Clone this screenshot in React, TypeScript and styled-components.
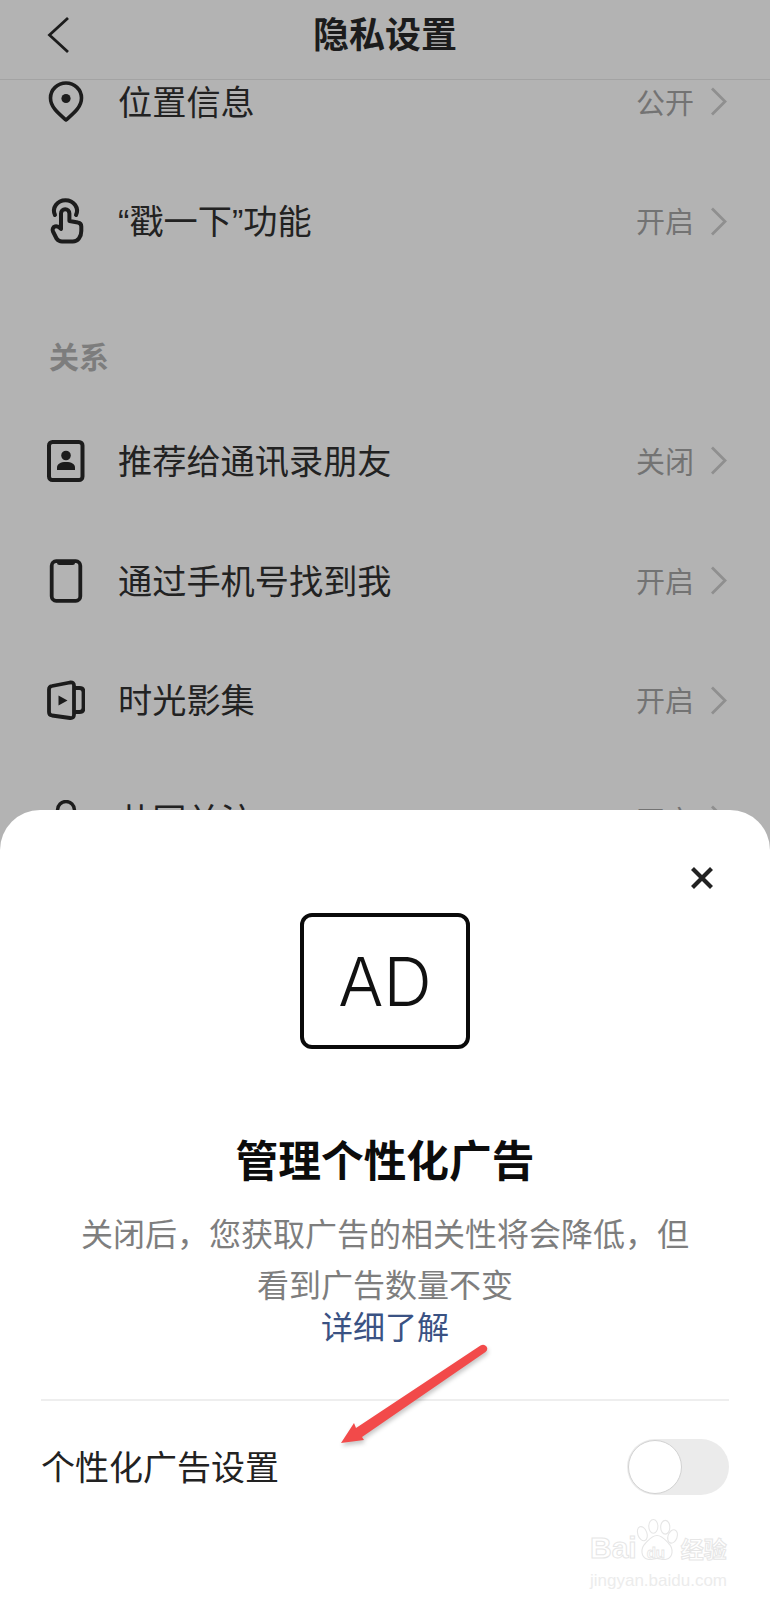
import React from "react";
import styled, { createGlobalStyle } from "styled-components";

const Global = createGlobalStyle`
  html, body { margin: 0; padding: 0; background: #b3b3b3; }
  * { box-sizing: border-box; }
`;

const CJK = `"Noto Sans CJK SC", "Noto Sans", sans-serif`;

const Phone = styled.div`
  position: relative;
  width: 770px;
  height: 1600px;
  overflow: hidden;
  background: #b3b3b3;
  font-family: ${CJK};
`;

const Header = styled.header`
  position: relative;
  z-index: 2;
  height: 80px;
  display: grid;
  grid-template-columns: 1fr auto 1fr;
  align-items: center;
  padding: 0 47px 15px;
  background: #b3b3b3;
  border-bottom: 1px solid #a3a3a3;
`;

const BackIcon = styled.svg`
  margin-top: 6px;
`;

const Title = styled.h1`
  margin: 0;
  font-size: 36px;
  line-height: 44px;
  font-weight: 700;
  color: #1c1c1c;
`;

const List = styled.main`
  margin-top: -38px;
  padding: 0 43px 0 47px;
`;

const Row = styled.div`
  height: 119.6px;
  display: flex;
  align-items: center;
`;

const IconSlot = styled.div`
  width: 38px;
  display: flex;
  justify-content: center;
  align-items: center;
  margin-right: 33px;
  color: #1c1c1c;
`;

const RowLabel = styled.span`
  flex: 1;
  font-family: "Liberation Sans", ${CJK};
  font-size: 34.2px;
  font-weight: 400;
  color: #222;
  line-height: 44px;
  padding-top: 2px;
`;

const RowValue = styled.span`
  font-size: 29px;
  color: #737373;
  margin-right: 16px;
  line-height: 40px;
  padding-bottom: 2px;
`;

const SectionLabel = styled.div`
  height: 120px;
  display: flex;
  align-items: flex-end;
  padding: 0 0 26px 2px;
  font-size: 30px;
  line-height: 40px;
  font-weight: 700;
  color: #7d7d7d;
`;

const Sheet = styled.section`
  position: absolute;
  z-index: 3;
  left: 0;
  right: 0;
  top: 810px;
  bottom: 0;
  padding: 103px 41px 0;
  background: #fff;
  border-radius: 40px 40px 0 0;
  display: flex;
  flex-direction: column;
  align-items: center;
`;

const Close = styled.div`
  position: absolute;
  right: 56px;
  top: 56px;
  width: 24px;
  height: 24px;
  display: flex;
`;

const AdBox = styled.div`
  width: 170px;
  height: 136px;
  border: 4px solid #0a0a0a;
  border-radius: 12px;
  display: flex;
  align-items: center;
  justify-content: center;
  font-family: Inter, "Liberation Sans", sans-serif;
  font-weight: 300;
  font-size: 67px;
  line-height: 1;
  color: #111;
`;

const SheetTitle = styled.h2`
  margin: 80px 0 0;
  font-size: 42.7px;
  line-height: 58px;
  font-weight: 700;
  color: #0c0c0c;
`;

const Desc = styled.p`
  margin: 20px 0 0;
  width: 620px;
  text-align: center;
  font-size: 32px;
  line-height: 51px;
  color: #7e7e7e;
`;

const More = styled.a`
  display: block;
  font-size: 32px;
  line-height: 40px;
  margin-top: -4px;
  color: #3a5283;
`;

const Divider = styled.hr`
  align-self: stretch;
  margin: 54px 0 0;
  border: 0;
  height: 2px;
  background: #eeeeee;
`;

const SettingRow = styled.div`
  align-self: stretch;
  margin-top: 37px;
  display: flex;
  align-items: center;
  justify-content: space-between;
`;

const SettingLabel = styled.span`
  font-size: 34px;
  line-height: 56px;
  padding-bottom: 2px;
  color: #222;
`;

const Track = styled.div`
  width: 102px;
  height: 56px;
  border-radius: 28px;
  background: #ebebeb;
  display: flex;
  align-items: center;
  padding-left: 1px;
`;

const Knob = styled.div`
  width: 54px;
  height: 54px;
  border-radius: 50%;
  background: #fff;
  border: 1px solid #d2d2d2;
`;

const ArrowMark = styled.svg`
  position: absolute;
  z-index: 4;
  left: 330px;
  top: 1335px;
  filter: drop-shadow(1px 3px 2px rgba(0, 0, 0, 0.22));
`;

const Watermark = styled.div`
  position: absolute;
  z-index: 4;
  left: 590px;
  top: 1516px;
  width: 150px;
  display: flex;
  flex-direction: column;
`;

const MarkTop = styled.div`
  display: flex;
  align-items: flex-end;
  height: 48px;
  white-space: nowrap;
`;

const Outlined = styled.span<{ $size: number }>`
  font-family: ${(p) => (p.$size > 24 ? `"Liberation Sans", sans-serif` : CJK)};
  font-size: ${(p) => p.$size}px;
  line-height: 32px;
  font-weight: 700;
  color: #fff;
  -webkit-text-stroke: 1px #e6e6e6;
`;

const Paw = styled.div`
  position: relative;
  width: 44px;
  height: 46px;
  flex: none;
  margin: 0 2px 0 -2px;
`;

const PawText = styled.span`
  position: absolute;
  left: 12px;
  top: 27px;
  font-family: "Liberation Sans", sans-serif;
  font-size: 15px;
  line-height: 16px;
  font-weight: 700;
  color: #fff;
  -webkit-text-stroke: 0.8px #e6e6e6;
`;

const MarkUrl = styled.div`
  margin-top: 7px;
  font-family: "Liberation Sans", sans-serif;
  font-size: 17px;
  line-height: 20px;
  white-space: nowrap;
  color: #ececec;
`;

const Chevron = () => (
  <svg width="17" height="29" viewBox="0 0 17 29" fill="none" stroke="#8f8f8f" strokeWidth="2.8">
    <path d="M2 1.5 15 14.5 2 27.5" />
  </svg>
);

const Pin = () => (
  <svg width="36" height="42" viewBox="48 81 36 42" fill="none" stroke="currentColor" strokeWidth="3.6">
    <path d="M66 120 C58 113 50.5 107 50.5 98 a15.5 15 0 0 1 31 0 C81.5 107 74 113 66 120 Z" strokeLinejoin="round" />
    <circle cx="66" cy="98.5" r="4.6" fill="currentColor" stroke="none" />
  </svg>
);

const Touch = () => (
  <svg width="38" height="48" viewBox="47 198 38 48" fill="none" stroke="currentColor" strokeWidth="4" strokeLinejoin="round" strokeLinecap="round">
    <path d="M55 216 a11.5 10.5 0 1 1 21 0" />
    <path d="M61 229 V214.5 a4.2 4.2 0 0 1 8.4 0 V222 l8.5 1.5 a4 4 0 0 1 3.4 4 V232 c0 6 -3.5 10.5 -8.5 10.5 H62 c-2.5 0 -4 -1 -5.5 -3 L53 232.5 c-1 -2 0 -4.5 2 -5 c2 -.5 4 .3 6 2.5 Z" />
  </svg>
);

const Contact = () => (
  <svg width="38" height="42" viewBox="47 441 38 42" fill="none">
    <rect x="49" y="443" width="33.5" height="38" rx="3.5" stroke="currentColor" strokeWidth="4" />
    <circle cx="66" cy="456.5" r="4.8" fill="currentColor" />
    <path d="M57 471 v-2.5 c0 -3.5 3.5 -5.5 9 -5.5 s9 2 9 5.5 v2.5 Z" fill="currentColor" />
  </svg>
);

const Mobile = () => (
  <svg width="34" height="44" viewBox="50 559.5 34 44" fill="none">
    <rect x="52.7" y="561.7" width="28.6" height="39.6" rx="4.5" stroke="currentColor" strokeWidth="3.8" />
    <path d="M58 561 H76 V563 q0 2.5 -2.5 2.5 H60.5 Q58 565.5 58 563 Z" fill="currentColor" />
  </svg>
);

const Film = () => (
  <svg width="38" height="40" viewBox="47 681.5 38 40" fill="none" stroke="currentColor" strokeWidth="3.8" strokeLinejoin="round">
    <path d="M49 691 q0 -3 3 -3.5 L70 684 q4 -.5 4 3 V716 q0 4 -4 3.5 L52 717 q-3 -.5 -3 -3.5 Z" />
    <path d="M75 689.5 H79.5 q4 0 4 4 V709.5 q0 4 -4 4 H75" />
    <path d="M58.5 697 L67.5 702 L58.5 707 Z" fill="currentColor" stroke="none" />
  </svg>
);

const Friend = () => (
  <svg width="38" height="40" viewBox="47 800 38 40" fill="none" stroke="currentColor" strokeWidth="3.4">
    <circle cx="66" cy="810" r="8.5" />
  </svg>
);

const settings: { label: string; value: string; icon: React.ReactNode }[] = [
  { label: "位置信息", value: "公开", icon: <Pin /> },
  { label: "“戳一下”功能", value: "开启", icon: <Touch /> },
];

const relations: { label: string; value: string; icon: React.ReactNode }[] = [
  { label: "推荐给通讯录朋友", value: "关闭", icon: <Contact /> },
  { label: "通过手机号找到我", value: "开启", icon: <Mobile /> },
  { label: "时光影集", value: "开启", icon: <Film /> },
  { label: "共同关注", value: "开启", icon: <Friend /> },
];

const SettingItem = ({ label, value, icon }: { label: string; value: string; icon: React.ReactNode }) => (
  <Row>
    <IconSlot>{icon}</IconSlot>
    <RowLabel>{label}</RowLabel>
    <RowValue>{value}</RowValue>
    <Chevron />
  </Row>
);

export default function App() {
  return (
    <Phone>
      <Global />
      <Header>
        <BackIcon width="24" height="38" viewBox="0 0 24 38" fill="none" stroke="#1c1c1c" strokeWidth="2.8">
          <path d="M21 2 2.5 19 21 36" />
        </BackIcon>
        <Title>隐私设置</Title>
      </Header>
      <List>
        {settings.map((s) => (
          <SettingItem key={s.label} {...s} />
        ))}
        <SectionLabel>关系</SectionLabel>
        {relations.map((s) => (
          <SettingItem key={s.label} {...s} />
        ))}
      </List>
      <Sheet>
        <Close>
          <svg width="24" height="24" viewBox="0 0 24 24" stroke="#222" strokeWidth="4.2" fill="none">
            <path d="M2.5 2.5 21.5 21.5 M21.5 2.5 2.5 21.5" />
          </svg>
        </Close>
        <AdBox>AD</AdBox>
        <SheetTitle>管理个性化广告</SheetTitle>
        <Desc>关闭后，您获取广告的相关性将会降低，但看到广告数量不变</Desc>
        <More>详细了解</More>
        <Divider />
        <SettingRow>
          <SettingLabel>个性化广告设置</SettingLabel>
          <Track>
            <Knob />
          </Track>
        </SettingRow>
      </Sheet>
      <ArrowMark width="170" height="120" viewBox="330 1335 170 120">
        <path
          d="M480.5 1345.5 q3.5 -2 6 1 q2 3 -1 5.5 L362 1437 L364 1440 L341 1443 L354 1423 L356 1428 Z"
          fill="#f24a4a"
        />
      </ArrowMark>
      <Watermark>
        <MarkTop>
          <Outlined $size={30}>Bai</Outlined>
          <Paw>
            <svg width="44" height="46" viewBox="0 0 48 46" fill="#fff" stroke="#e6e6e6" strokeWidth="1.2">
              <ellipse cx="8" cy="15" rx="5" ry="8" transform="rotate(-20 8 15)" />
              <ellipse cx="20" cy="7" rx="5" ry="7.5" />
              <ellipse cx="33" cy="8" rx="5" ry="7.5" />
              <ellipse cx="41" cy="18" rx="5" ry="7.5" transform="rotate(20 41 18)" />
              <path d="M24 17 c6 0 9 5 13 9 c5 5 5 15 -3 17 c-4 1 -7 -1 -10 -1 s-6 2 -10 1 c-8 -2 -8 -12 -3 -17 c4 -4 7 -9 13 -9 Z" />
            </svg>
            <PawText>du</PawText>
          </Paw>
          <Outlined $size={23}>经验</Outlined>
        </MarkTop>
        <MarkUrl>jingyan.baidu.com</MarkUrl>
      </Watermark>
    </Phone>
  );
}
